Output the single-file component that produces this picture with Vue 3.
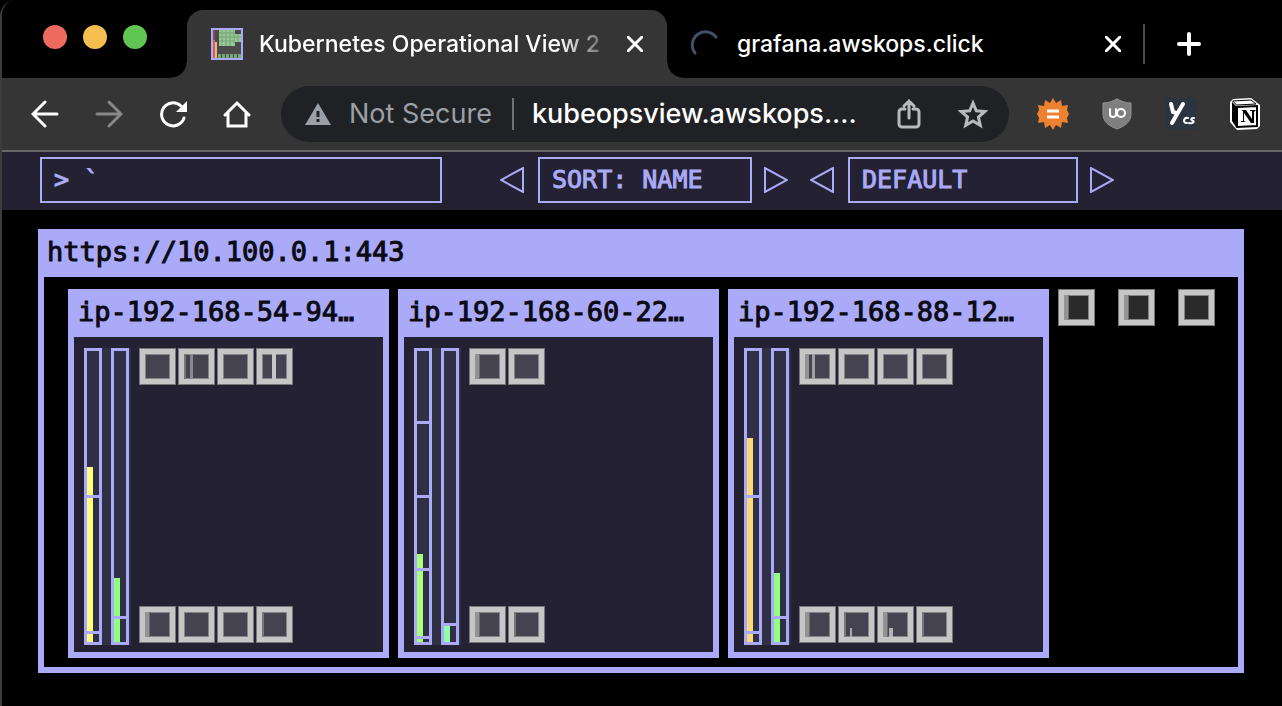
<script setup>
import { ref } from 'vue'

const query = ref('`')

const METER = 291
const pct = (v) => `${(v / METER) * 100}%`

const nodes = [
  {
    name: 'ip-192-168-54-94…',
    meters: [
      { label: 'CPU', fill: 175, color: '#ffff80', ticks: [144, 8] },
      { label: 'Memory', fill: 64, color: '#91ff80', ticks: [23] },
    ],
    pods: ['plain', 'line', 'plain', 'double'],
    system: ['shade', 'plain', 'plain', 'slight'],
  },
  {
    name: 'ip-192-168-60-22…',
    meters: [
      { label: 'CPU', fill: 88, color: '#a8ff78', ticks: [218, 144, 71, 3] },
      { label: 'Memory', fill: 17, color: '#91ffaa', ticks: [16] },
    ],
    pods: ['shade', 'plain'],
    system: ['shade', 'slight'],
  },
  {
    name: 'ip-192-168-88-12…',
    meters: [
      { label: 'CPU', fill: 204, color: '#fbd97a', ticks: [144, 8] },
      { label: 'Memory', fill: 69, color: '#91ff80', ticks: [23] },
    ],
    pods: ['shadeLine', 'plain', 'plain', 'plain'],
    system: ['shade', 'slightTick', 'shadeTick', 'slight'],
  },
]

const pending = ['shade', 'shade', 'plain']

/* [x, y, width, height, colour] inside a 37-unit pod */
const marks = {
  plain: [],
  slight: [[6, 6, 2, 25, '#777779']],
  shade: [[6, 6, 4, 25, '#939393'], [10, 6, 1, 25, '#6d6d70']],
  line: [[6, 6, 2, 25, '#77777b'], [12, 6, 3, 25, '#88888b']],
  double: [[16, 6, 4, 25, '#c6c6c6']],
  shadeLine: [[6, 6, 4, 25, '#939393'], [13, 6, 3, 25, '#a0a0a0']],
  slightTick: [[6, 6, 2, 25, '#777779'], [12, 22, 2, 9, '#a8a8a8']],
  shadeTick: [[6, 6, 4, 25, '#939393'], [10, 6, 1, 25, '#6d6d70'], [12, 22, 4, 9, '#b4b4b4']],
}
</script>

<template>
  <div class="window">
    <header class="tabstrip">
      <div class="lights">
        <button class="light red" aria-label="Close window"></button>
        <button class="light amber" aria-label="Minimise window"></button>
        <button class="light green" aria-label="Zoom window"></button>
      </div>
      <div class="tab active">
        <svg class="favicon" viewBox="0 0 32 32" width="32" height="32">
          <rect width="32" height="32" fill="#4a4a4a" />
          <rect x="2" y="2" width="2" height="28" fill="#8b4a48" />
          <rect x="2" y="12" width="2" height="18" fill="#d0625a" />
          <rect x="4" y="14" width="2" height="16" fill="#f0b878" />
          <path d="M8 2h16v4h6v8h-6v4H8z" fill="#97c897" />
          <path d="M8 5h16M8 9h22M8 13h16M11 2v16M15 2v16M19 2v16M23 2v14M27 6v8" stroke="#76a277" fill="none" />
          <path d="M7 28h24" stroke="#75a877" stroke-width="4" stroke-dasharray="3 1" />
          <rect x="1" y="1" width="30" height="30" fill="none" stroke="#aaaaf8" stroke-width="2" />
        </svg>
        <span class="title fade">Kubernetes Operational View 2</span>
        <button class="icon close" aria-label="Close tab">
          <svg viewBox="0 0 16 16" width="16" height="16"><path d="M1 1l14 14M15 1L1 15" /></svg>
        </button>
      </div>
      <div class="tab idle">
        <svg class="spinner" viewBox="0 0 32 32" width="32" height="32">
          <path d="M6 25A13 13 0 1 1 27 9" fill="none" stroke="#435069" stroke-width="3" stroke-linecap="round" />
        </svg>
        <span class="title">grafana.awskops.click</span>
        <button class="icon close" aria-label="Close tab">
          <svg viewBox="0 0 16 16" width="16" height="16"><path d="M1 1l14 14M15 1L1 15" /></svg>
        </button>
      </div>
      <span class="tab-divider"></span>
      <button class="icon new-tab" aria-label="New tab">
        <svg viewBox="0 0 24 24" width="24" height="24"><path class="thick" d="M12 2v20M2 12h20" /></svg>
      </button>
    </header>

    <nav class="toolbar">
      <button class="icon" aria-label="Back">
        <svg viewBox="0 0 28 28" width="28" height="28"><path d="M26 14H3M14 2L2 14l12 12" /></svg>
      </button>
      <button class="icon dim" aria-label="Forward">
        <svg viewBox="0 0 28 28" width="28" height="28"><path d="M2 14h24M14 2l12 12-12 12" /></svg>
      </button>
      <button class="icon" aria-label="Reload">
        <svg viewBox="0 0 28 28" width="28" height="28">
          <path d="M25 18A11.500 11.500 0 1 1 22 6" />
          <path d="M28 1v11H17z" fill="#fff" stroke="none" />
        </svg>
      </button>
      <button class="icon" aria-label="Home">
        <svg viewBox="0 0 28 28" width="28" height="28"><path d="M2 15L14 3l12 12M5 13v13h18V13" /></svg>
      </button>

      <div class="omnibox">
        <svg class="warn" viewBox="0 0 26 22" width="26" height="22">
          <path d="M13 0l13 22H0z" fill="#9aa0a6" />
          <path d="M13 8v6M13 16v3" stroke="#202124" stroke-width="3" />
        </svg>
        <span class="insecure">Not Secure</span>
        <span class="bar"></span>
        <a class="url" href="#">kubeopsview.awskops....</a>
        <button class="icon soft share" aria-label="Share">
          <svg viewBox="0 0 24 30" width="24" height="30">
            <path d="M8 10H5a3 3 0 0 0-3 3v12a3 3 0 0 0 3 3h14a3 3 0 0 0 3-3V13a3 3 0 0 0-3-3h-3M12 19V2M7 7l5-5 5 5" />
          </svg>
        </button>
        <button class="icon soft" aria-label="Bookmark">
          <svg viewBox="0 0 30 30" width="30" height="30">
            <path d="M15 4l3.300 7.800 8.500.7-6.400 5.600 1.900 8.300-7.300-4.400-7.300 4.400 1.900-8.300-6.400-5.600 8.500-.7z" />
          </svg>
        </button>
      </div>

      <button class="icon" aria-label="Extension">
        <svg viewBox="0 0 32 32" width="32" height="32">
          <path d="M16 0l3 5 5-3 1 6 6-1-1 5 2 4-2 4 1 5-6-1-1 6-5-3-3 5-3-5-5 3-1-6-6 1 1-5-2-4 2-4-1-5 6 1 1-6 5 3z" fill="#ee8130" stroke="none" />
          <path class="flat" d="M10 13h12M10 19h12" />
        </svg>
      </button>
      <button class="icon" aria-label="uBlock Origin">
        <svg viewBox="0 0 32 32" width="32" height="32">
          <path class="hair" d="M16 1c4 2 8 4 14 4v11c0 8-6 12-14 15C8 28 2 24 2 16V5c6 0 10-2 14-4z" fill="#7f7f7f" stroke="#929292" />
          <path class="thin" d="M9 11v5a3 3 0 0 0 6 0v-5" />
          <circle class="thin" cx="20" cy="15" r="4" />
        </svg>
      </button>
      <button class="icon" aria-label="Ycs">
        <svg viewBox="0 0 32 32" width="32" height="32">
          <rect width="32" height="32" fill="#2c3440" stroke="none" />
          <path class="thick" d="M6 6l2 8 3 1M18 6l-7 12-4 7" />
          <path class="thin" d="M23 20c-4-1-6 5-1 5M29 20c-4 0-3 2-1 3s-1 3-4 2" />
        </svg>
      </button>
      <button class="icon" aria-label="Notion">
        <svg viewBox="0 0 32 32" width="32" height="32">
          <path d="M4 1l18-1 9 7v21l-3 3-20 1-7-8V4z" fill="#fff" stroke="none" />
          <path d="M3 4l4 4v21l-4-6z" fill="#000" stroke="none" />
          <path class="hair" d="M4 3l18-1 5 4-19 1z" fill="#fff" stroke="#000" />
          <path class="thin" d="M8 9l20-1v20l-20 1z" fill="#fff" stroke="#000" />
          <path d="M12 12h5l6 9v-8h-2v-1h6l-2 2v11h-3l-7-10v8l2 1h-5v-1h2V13z" fill="#000" stroke="none" />
        </svg>
      </button>
    </nav>

    <main class="page">
      <form class="menu" @submit.prevent>
        <label class="search">
          <span>&gt;</span>
          <input v-model="query" type="text" aria-label="Filter" />
        </label>
        <div class="picker sort">
          <button type="button" aria-label="Previous sort"><svg viewBox="0 0 24 26" width="24" height="26"><path d="M23 1v24L1 13z" /></svg></button>
          <button type="button" class="value">SORT: NAME</button>
          <button type="button" aria-label="Next sort"><svg viewBox="0 0 24 26" width="24" height="26"><path d="M1 1v24l22-12z" /></svg></button>
        </div>
        <div class="picker theme">
          <button type="button" aria-label="Previous theme"><svg viewBox="0 0 24 26" width="24" height="26"><path d="M23 1v24L1 13z" /></svg></button>
          <button type="button" class="value">DEFAULT</button>
          <button type="button" aria-label="Next theme"><svg viewBox="0 0 24 26" width="24" height="26"><path d="M1 1v24l22-12z" /></svg></button>
        </div>
      </form>

      <section class="cluster">
        <h1>https://10.100.0.1:443</h1>
        <div class="cluster-body">
          <article v-for="node in nodes" :key="node.name" class="node">
            <h2>{{ node.name }}</h2>
            <div class="node-body">
              <div class="meters">
                <div v-for="m in node.meters" :key="m.label" class="meter" role="img" :aria-label="m.label">
                  <i class="fill" :style="{ height: pct(m.fill), background: m.color }"></i>
                  <i v-for="t in m.ticks" :key="t" class="tick" :style="{ bottom: pct(t) }"></i>
                </div>
              </div>
              <div class="pods">
                <div v-for="(row, r) in [node.pods, node.system]" :key="r" class="pod-row">
                  <svg v-for="(kind, i) in row" :key="i" class="pod" viewBox="0 0 37 37" width="37" height="37">
                    <rect class="halo" width="37" height="37" />
                    <rect class="frame" x="1" y="1" width="35" height="35" />
                    <rect class="edge" x="6" y="6" width="25" height="25" />
                    <rect class="core" x="7" y="7" width="23" height="23" />
                    <rect v-for="(k, j) in marks[kind]" :key="j" :x="k[0]" :y="k[1]" :width="k[2]" :height="k[3]" :fill="k[4]" />
                  </svg>
                </div>
              </div>
            </div>
          </article>
          <div class="pending">
            <svg v-for="(kind, i) in pending" :key="i" class="pod" viewBox="0 0 37 37" width="37" height="37">
              <rect class="halo" width="37" height="37" />
              <rect class="frame" x="1" y="1" width="35" height="35" />
              <rect class="edge" x="6" y="6" width="25" height="25" />
              <rect class="core" x="7" y="7" width="23" height="23" />
              <rect v-for="(k, j) in marks[kind]" :key="j" :x="k[0]" :y="k[1]" :width="k[2]" :height="k[3]" :fill="k[4]" />
            </svg>
          </div>
        </div>
      </section>
    </main>
  </div>
</template>

<style>
html,
body {
  background: #000;
}
</style>

<style scoped>
* {
  box-sizing: border-box;
}
button {
  padding: 0;
  border: 0;
  background: none;
  font: inherit;
  color: inherit;
}
svg {
  display: block;
  flex: none;
}
.window {
  min-height: 100vh;
  background: #000;
  border-left: 2px solid #3c3c3c;
  border-top-left-radius: 16px;
  color: #fff;
  font-family: Inter, "Liberation Sans", sans-serif;
  font-weight: 500;
  overflow: hidden;
}
.tabstrip {
  display: flex;
  align-items: center;
  height: 78px;
  background: #000;
}
.lights {
  display: flex;
  gap: 16px;
  width: 185px;
  padding: 0 0 4px 41px;
}
.light {
  width: 24px;
  height: 24px;
  border-radius: 50%;
}
.red { background: #ed6a5e; }
.amber { background: #f5bf4f; }
.green { background: #61c554; }
.icon {
  flex: none;
  color: #fff;
}
.icon svg {
  fill: none;
  stroke: currentColor;
  stroke-width: 3px;
  stroke-linecap: round;
}
.hair { stroke-width: 1px; }
.thin { stroke-width: 2px; }
.thick { stroke-width: 4px; }
.flat { stroke-linecap: butt; }
.tab {
  display: flex;
  align-items: center;
  font-size: 23px;
  line-height: 32px;
}
.tab.active {
  position: relative;
  align-self: flex-end;
  width: 480px;
  height: 68px;
  padding: 0 24px;
  background: #353535;
  border-radius: 16px 16px 0 0;
}
.tab.active::before,
.tab.active::after {
  content: "";
  position: absolute;
  bottom: 0;
  width: 16px;
  height: 16px;
}
.tab.active::before {
  right: 100%;
  background: radial-gradient(circle at 0 0, transparent 15px, #353535 16px);
}
.tab.active::after {
  left: 100%;
  background: radial-gradient(circle at 100% 0, transparent 15px, #353535 16px);
}
.tab.idle {
  width: 476px;
  height: 68px;
  align-self: flex-end;
  padding: 0 22px;
}
.title {
  flex: 1;
  margin: 0 16px;
  overflow: hidden;
  white-space: nowrap;
}
.fade {
  mask-image: linear-gradient(to right, #000 300px, transparent 360px);
}
.tab-divider {
  width: 2px;
  height: 40px;
  margin-top: 10px;
  background: #4a4a4a;
}
.new-tab {
  margin: 10px 0 0 32px;
}
.toolbar {
  display: flex;
  align-items: center;
  gap: 32px;
  height: 74px;
  padding: 0 21px 0 29px;
  background: #353535;
  border-bottom: 2px solid #67676a;
}
.toolbar > .icon:nth-child(-n + 4) {
  margin-right: 4px;
}
.dim { color: #878787; }
.soft { color: #b8b9ba; }
.omnibox {
  display: flex;
  flex: 1;
  align-items: center;
  min-width: 0;
  height: 56px;
  margin-left: -6px;
  margin-right: -4px;
  padding: 0 21px 0 24px;
  border-radius: 28px;
  background: #202124;
  font-size: 27px;
  line-height: 36px;
  white-space: nowrap;
}
.insecure {
  margin-left: 18px;
  color: #9aa0a6;
  font-weight: 400;
}
.bar {
  width: 2px;
  height: 32px;
  margin: 0 18px 0 20px;
  background: #6d7074;
}
.url {
  flex: 1;
  min-width: 0;
  color: #fff;
  text-decoration: none;
}
.share {
  margin-right: 37px;
}
.page {
  font-family: "DejaVu Sans Mono", "Liberation Mono", monospace;
  font-weight: 400;
  -webkit-text-stroke: 1px currentColor;
}
.menu {
  display: flex;
  align-items: center;
  height: 58px;
  padding: 0 38px 2px;
  background: #242232;
  color: #aaaaf8;
  font-size: 25px;
  line-height: 32px;
}
.search {
  display: flex;
  align-items: center;
  gap: 15px;
  width: 402px;
  height: 46px;
  margin-right: 58px;
  padding: 0 12px;
  border: 2px solid #aaaaf8;
}
.search input {
  flex: 1;
  min-width: 0;
  padding: 0;
  border: 0;
  outline: 0;
  background: none;
  color: inherit;
  font: inherit;
}
.picker {
  display: flex;
  align-items: center;
  gap: 12px;
  margin-right: 22px;
}
.picker svg {
  fill: none;
  stroke: #aaaaf8;
  stroke-width: 2px;
}
.value {
  width: 214px;
  height: 46px;
  margin-left: 2px;
  padding: 0 12px;
  border: 2px solid #aaaaf8;
  text-align: left;
}
.theme .value {
  width: 230px;
}
.cluster {
  margin: 19px 38px 33px 36px;
  border: 6px solid #aaaaf8;
  border-top: 0;
  color: #0b0b14;
}
h1,
h2 {
  height: 48px;
  margin: 0;
  background: #aaaaf8;
  font-size: 27px;
  font-weight: 400;
  line-height: 46px;
  white-space: nowrap;
}
h1 {
  padding-left: 3px;
}
h2 {
  padding-left: 4px;
}
.cluster-body {
  display: flex;
  gap: 9px;
  padding: 12px 0 9px 24px;
}
.node {
  flex: none;
  width: 321px;
  border: 6px solid #aaaaf8;
  border-top: 0;
  background: #242232;
}
.node-body {
  display: flex;
  gap: 8px;
  padding: 11px 10px 7px;
}
.meters {
  display: flex;
  gap: 9px;
  height: 297px;
  padding-right: 2px;
  background: #303044;
}
.meter {
  position: relative;
  width: 18px;
  border: 3px solid #aaaaf8;
}
.fill {
  position: absolute;
  bottom: 0;
  left: 0;
  width: 6px;
}
.tick {
  position: absolute;
  left: 0;
  width: 100%;
  height: 3px;
  background: #aaaaf8;
}
.pods {
  display: flex;
  flex-direction: column;
  justify-content: space-between;
  padding-bottom: 2px;
}
.pod-row {
  display: flex;
  gap: 2px;
}
.halo { fill: #77777c; }
.frame { fill: #c6c6c6; }
.edge { fill: #858588; }
.core { fill: #44434f; }
.pending {
  display: flex;
  gap: 23px;
}
.pending .core { fill: #2a2a2a; }
</style>
